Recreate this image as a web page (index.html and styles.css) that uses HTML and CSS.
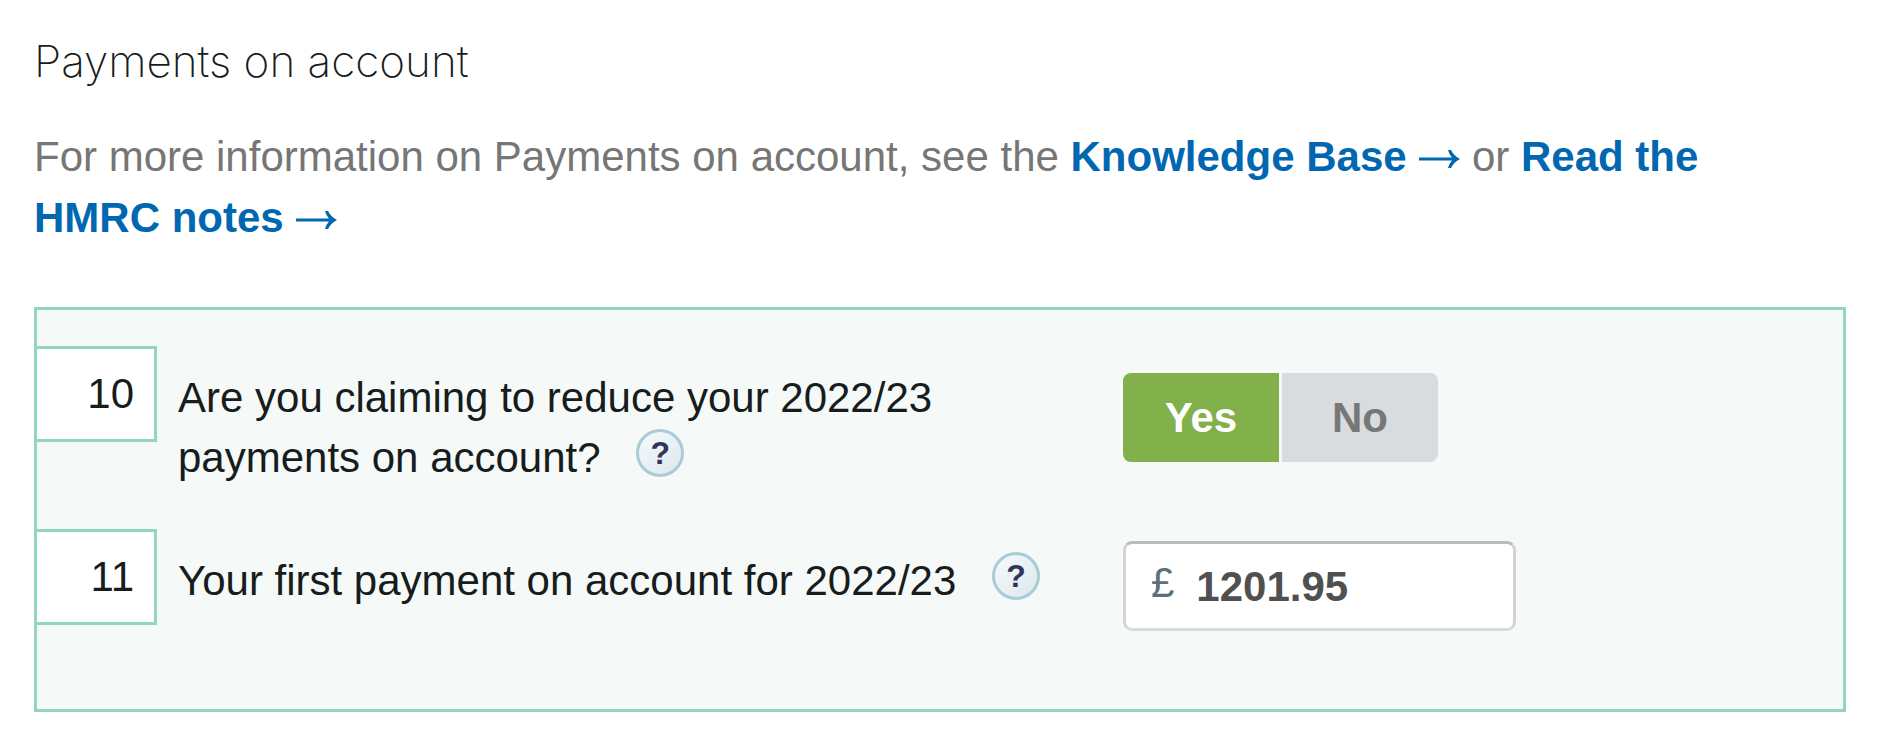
FILE: index.html
```html
<!DOCTYPE html>
<html lang="en">

<head>
  <meta charset="UTF-8">
  <meta name="viewport" content="width=device-width, initial-scale=1">
  <title>Payments on account</title>
  <link rel="stylesheet" href="styles.css">
</head>

<body>

  <main class="section">
    <h2 class="section__title">Payments on account</h2>

    <p class="section__intro">
      For more information on Payments on account, see the
      <a href="#knowledge-base">Knowledge Base <svg class="arrow" viewBox="0 0 42 20" aria-hidden="true"><path d="M1 8.5h33q-3-3-4-7.500h3q3 6 9 9-6 3-9 9h-3q1-4.500 4-7.500H1z"/></svg></a> or
      <a href="#hmrc-notes">Read the HMRC notes <svg class="arrow" viewBox="0 0 42 20" aria-hidden="true"><path d="M1 8.5h33q-3-3-4-7.500h3q3 6 9 9-6 3-9 9h-3q1-4.500 4-7.500H1z"/></svg></a>
    </p>

    <form class="panel">
      <div class="row">
        <span class="row__number">10</span>
        <div class="row__label">
          <span id="reduce-label">Are you claiming to reduce your 2022/23 payments on account?</span>
          <button type="button" class="help">?</button>
        </div>
        <div class="row__control">
          <div class="toggle" role="radiogroup" aria-labelledby="reduce-label">
            <input class="toggle__input" type="radio" name="reduce" id="reduce-yes" checked>
            <label class="toggle__option" for="reduce-yes">Yes</label>
            <input class="toggle__input" type="radio" name="reduce" id="reduce-no">
            <label class="toggle__option" for="reduce-no">No</label>
          </div>
        </div>
      </div>

      <div class="row">
        <span class="row__number">11</span>
        <div class="row__label">
          <label for="first-payment">Your first payment on account for 2022/23</label>
          <button type="button" class="help">?</button>
        </div>
        <div class="row__control row__control--money">
          <div class="money">
            <span class="money__symbol">£</span>
            <input class="money__input" type="text" id="first-payment" value="1201.95">
          </div>
        </div>
      </div>
    </form>
  </main>

</body>

</html>
```

FILE: styles.css
```css
* {
  box-sizing: border-box;
}

body {
  margin: 0;
  background: #fff;
  color: #171c1c;
  font-family: "Liberation Sans", Arial, sans-serif;
  font-size: 42px;
  line-height: 60px;
}

.section {
  padding: 31px 38px 40px 34px;
}

.section__title {
  margin: 0 0 35px;
  font-family: Inter, "Liberation Sans", sans-serif;
  font-size: 44px;
  font-weight: 200;
}

.section__intro {
  max-width: 1740px;
  margin: 0 0 59px;
  color: #767676;
  line-height: 61px;
}

.section__intro a {
  color: #0067b0;
  font-weight: bold;
  text-decoration: none;
}

.arrow {
  width: 42px;
  height: 20px;
  fill: currentColor;
  vertical-align: 2px;
}

.panel {
  padding: 36px 0 0;
  border: 3px solid #92d6c0;
  background: #f5f9f8;
}

.row {
  display: grid;
  grid-template-columns: 120px 161fr 120fr;
  align-items: start;
  padding-bottom: 41px;
}

.row:last-child {
  padding-bottom: 78px;
}

.row__number {
  padding-right: 20px;
  border: 3px solid #92d6c0;
  border-left: 0;
  background: #fff;
  line-height: 90px;
  text-align: right;
}

.row__label {
  padding: 22px 40px 0 21px;
}

.help {
  width: 48px;
  height: 48px;
  margin-left: 24px;
  padding: 0;
  border: 3px solid #abcbd6;
  border-radius: 50%;
  background: linear-gradient(135deg, #f6fafc, #dce8ed);
  color: #333459;
  font: bold 32px/40px "Liberation Sans", Arial, sans-serif;
  vertical-align: 8px;
}

.row__control {
  padding-top: 27px;
}

.row__control--money {
  padding-top: 12px;
}

.toggle {
  display: flex;
  gap: 3px;
}

.toggle__input {
  position: absolute;
  opacity: 0;
}

.toggle__option {
  width: 156px;
  background: #d8dcdf;
  color: #777;
  font-weight: bold;
  line-height: 89px;
  text-align: center;
  cursor: pointer;
}

.toggle__option:first-of-type {
  border-radius: 8px 0 0 8px;
}

.toggle__option:last-of-type {
  border-radius: 0 8px 8px 0;
}

.toggle__input:checked + .toggle__option {
  background: #82b04b;
  color: #fff;
}

.money {
  display: flex;
  width: 393px;
  height: 90px;
  padding-left: 25px;
  border: 3px solid #d3d3d3;
  border-top-color: #bbb;
  border-bottom-color: #d8dcdf;
  border-radius: 9px;
  background: #fff;
}

.money__symbol {
  color: #5d7079;
  line-height: 78px;
}

.money__input {
  flex: 1;
  min-width: 0;
  padding: 2px 0 0 22px;
  border: 0;
  background: none;
  color: #505050;
  font: inherit;
  font-weight: bold;
}
```
